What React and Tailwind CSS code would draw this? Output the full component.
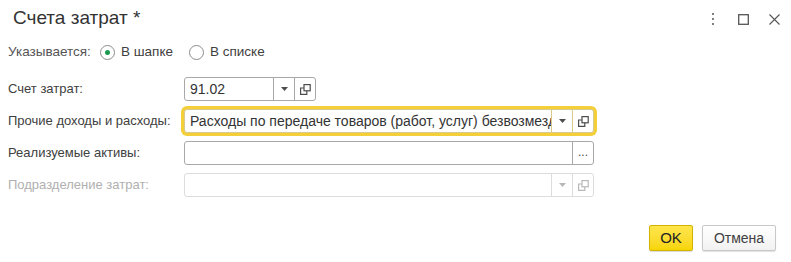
import React from 'react';

const Arrow = ({ color = '#4d4d4d' }) => (
  <svg width="7" height="4" viewBox="0 0 7 4">
    <polygon points="0,0 7,0 3.5,4" fill={color} />
  </svg>
);

const OpenIcon = ({ color = '#4d4d4d' }) => (
  <svg width="11" height="11" viewBox="0 0 11 11" fill="none" stroke={color} strokeWidth="1.2">
    <rect x="4" y="0.6" width="6.2" height="6.2" />
    <polyline points="4,4 0.6,4 0.6,10.4 6.8,10.4 6.8,6.8" />
  </svg>
);

const Btn = ({ children, border }) => (
  <div className={`w-[21px] h-full flex items-center justify-center border-l ${border}`}>
    {children}
  </div>
);

const Field = ({ width, value, focused, disabled, buttons }) => {
  const border = disabled ? 'border-[#dcdcdc]' : focused ? 'border-[#d9c98a]' : 'border-[#a8a8a8]';
  const iconColor = disabled ? '#b8b8b8' : '#4d4d4d';
  return (
    <div
      className={`${width} shrink-0 h-[24px] flex rounded-[3px] border bg-white ${border} ${
        focused ? 'ring-[3px] ring-[#f3cf3a]' : ''
      }`}
    >
      <div className="flex-1 min-w-0 overflow-hidden whitespace-nowrap pl-[5px] text-[14px] leading-[22px] text-[#333]">
        {value}
      </div>
      {buttons.map((b, i) => (
        <Btn key={i} border={border}>
          {b === 'arrow' && <Arrow color={iconColor} />}
          {b === 'open' && <OpenIcon color={iconColor} />}
          {b === 'dots' && <span className="text-[12px] leading-none text-[#4d4d4d] -mt-[2px]">...</span>}
        </Btn>
      ))}
    </div>
  );
};

const Row = ({ label, disabled, children }) => (
  <div className="flex items-center h-[24px]">
    <div
      className={`w-[184px] shrink-0 whitespace-nowrap pl-[8px] text-[13px] ${
        disabled ? 'text-[#b0b0b0]' : 'text-[#404040]'
      }`}
    >
      {label}
    </div>
    {children}
  </div>
);

const Radio = ({ checked, label }) => (
  <div className="flex items-center gap-[6px]">
    <div className="w-[15px] h-[15px] rounded-full border border-[#8c8c8c] flex items-center justify-center bg-white">
      {checked && <div className="w-[5px] h-[5px] rounded-full bg-[#1b9a4f]" />}
    </div>
    <span className="text-[13.5px] text-[#404040]">{label}</span>
  </div>
);

export default function App() {
  return (
    <div className="w-[791px] h-[262px] bg-white font-['Liberation_Sans',Arial,sans-serif] flex flex-col">
      {/* Header */}
      <div className="h-[38px] flex items-start pt-[6px] pl-[13px] pr-[11px]">
        <h1 className="text-[19px] leading-[24px] text-[#333]">Счета затрат *</h1>
        <div className="ml-auto flex items-center h-[24px] mt-[1px]">
          <div className="flex flex-col gap-[2.5px] items-center w-[4px]">
            <span className="w-[2.5px] h-[2.5px] bg-[#555] rounded-full" />
            <span className="w-[2.5px] h-[2.5px] bg-[#555] rounded-full" />
            <span className="w-[2.5px] h-[2.5px] bg-[#555] rounded-full" />
          </div>
          <svg className="ml-[23px]" width="11" height="11" viewBox="0 0 11 11" fill="none" stroke="#555" strokeWidth="1.3">
            <rect x="0.7" y="0.7" width="9.6" height="9.6" />
          </svg>
          <svg className="ml-[20px]" width="11" height="11" viewBox="0 0 11 11" fill="none" stroke="#555" strokeWidth="1.1">
            <path d="M0.5 0.5 L10.5 10.5 M10.5 0.5 L0.5 10.5" />
          </svg>
        </div>
      </div>

      {/* Radio row */}
      <div className="h-[28px] flex items-center pl-[8px]">
        <span className="text-[13.5px] text-[#555] w-[92px]">Указывается:</span>
        <Radio checked label="В шапке" />
        <div className="ml-[16px]">
          <Radio label="В списке" />
        </div>
      </div>

      {/* Fields */}
      <div className="mt-[11px] flex flex-col gap-[8px]">
        <Row label="Счет затрат:">
          <Field width="w-[132px]" value="91.02" buttons={['arrow', 'open']} />
        </Row>
        <Row label="Прочие доходы и расходы:">
          <Field
            width="w-[410px]"
            focused
            value="Расходы по передаче товаров (работ, услуг) безвозмездно"
            buttons={['arrow', 'open']}
          />
        </Row>
        <Row label="Реализуемые активы:">
          <Field width="w-[410px]" value="" buttons={['dots']} />
        </Row>
        <Row label="Подразделение затрат:" disabled>
          <Field width="w-[410px]" value="" disabled buttons={['arrow', 'open']} />
        </Row>
      </div>

      {/* Buttons */}
      <div className="mt-[28px] flex justify-end gap-[9px] pr-[15px]">
        <button className="w-[44px] h-[26px] rounded-[2px] border border-[#d2b400] bg-gradient-to-b from-[#ffe54a] to-[#f7d500] text-[15px] text-[#222] shadow-[0_1px_1px_rgba(0,0,0,0.15)]">
          OK
        </button>
        <button className="w-[74px] h-[26px] rounded-[2px] border border-[#c8c8c8] bg-gradient-to-b from-white to-[#f2f2f2] text-[14px] text-[#404040] shadow-[0_1px_1px_rgba(0,0,0,0.12)]">
          Отмена
        </button>
      </div>
    </div>
  );
}
